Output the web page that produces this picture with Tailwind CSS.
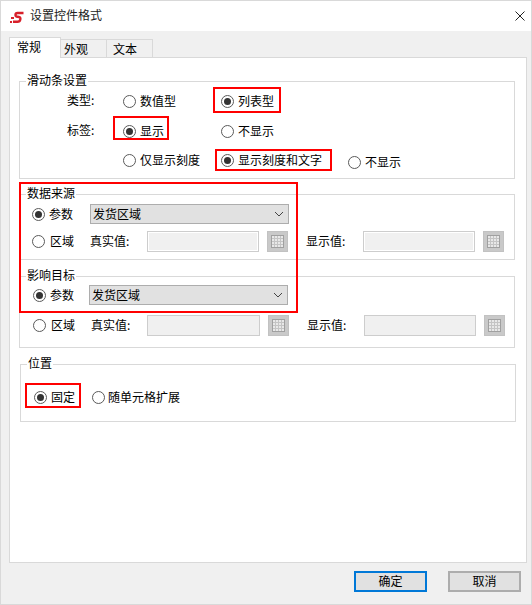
<!DOCTYPE html>
<html lang="zh-CN">
<head>
<meta charset="utf-8">
<title>设置控件格式</title>
<script src="https://cdn.jsdelivr.net/npm/@tailwindcss/browser@4"></script>
</head>
<body>
<div class="relative flex h-[605px] w-[532px] flex-col overflow-hidden border border-[#d9d9d9] bg-[#f0f0f0] font-['Noto_Sans_CJK_SC','Liberation_Sans',sans-serif] text-[12px] leading-[16px] text-black">

  <!-- title bar -->
  <div class="flex h-[30px] shrink-0 items-center bg-white">
    <svg class="ml-[9px] mt-[2px]" width="15" height="13" viewBox="0 0 15 13" fill="none"><path d="M13.5 2H7.5Q5.5 2 5.5 4Q5.5 5.6 7.5 5.8L9 6Q10.8 6.3 10.3 8.5Q9.8 10.8 7.5 10.8H3" stroke="#d8202a" stroke-width="2.4"/><rect x="1" y="6" width="3" height="2" fill="#d8202a"/><rect x="0" y="10" width="2" height="2" fill="#d8202a"/></svg>
    <span class="mb-[2px] ml-[5px] text-[#222]">设置控件格式</span>
    <svg class="ml-auto mr-[6px]" width="10" height="10" viewBox="0 0 10 10" fill="none"><path d="M0.5 0.5L9.5 9.5M9.5 0.5L0.5 9.5" stroke="#222" stroke-width="1"/></svg>
  </div>

  <!-- tabs -->
  <div class="mt-[6px] flex h-[20px] shrink-0 items-end pl-[8px]">
    <div class="relative z-10 -mb-px h-[21px] w-[52px] border border-b-0 border-[#d9d9d9] bg-white pl-[7px] pt-[1px]">常规</div>
    <div class="h-[18px] w-[46px] border border-l-0 border-b-0 border-[#d9d9d9] pl-[3px] pt-[1px]">外观</div>
    <div class="h-[18px] w-[46px] border border-l-0 border-b-0 border-[#d9d9d9] pl-[6px] pt-[1px]">文本</div>
  </div>

  <!-- panel -->
  <div class="ml-[8px] h-[506px] w-[518px] shrink-0 border border-[#d9d9d9] bg-white">

    <!-- 滑动条设置 -->
    <div class="ml-[9px] mt-[23px] h-[98px] w-[496px] border border-[#d9d9d9]">
      <div class="-mt-[10px] ml-[6px] w-fit bg-white px-[1px]">滑动条设置</div>
      <div class="mt-[3px] flex h-[20px] items-center pl-[47px]">
        <span class="mb-[2px] w-[56px]">类型:</span>
        <label class="flex w-[98px] items-center gap-[4px]"><span class="h-[13px] w-[13px] rounded-full border border-[#5a5a5a] bg-white"></span><span>数值型</span></label>
        <label class="flex items-center gap-[4px]"><span class="flex h-[13px] w-[13px] items-center justify-center rounded-full border border-[#5a5a5a] bg-white"><span class="h-[7px] w-[7px] rounded-full bg-[#333]"></span></span><span>列表型</span></label>
      </div>
      <div class="mt-[10px] flex h-[20px] items-center pl-[47px]">
        <span class="mb-[2px] w-[56px]">标签:</span>
        <label class="flex w-[98px] items-center gap-[4px]"><span class="flex h-[13px] w-[13px] items-center justify-center rounded-full border border-[#5a5a5a] bg-white"><span class="h-[7px] w-[7px] rounded-full bg-[#333]"></span></span><span>显示</span></label>
        <label class="flex items-center gap-[4px]"><span class="h-[13px] w-[13px] rounded-full border border-[#5a5a5a] bg-white"></span><span>不显示</span></label>
      </div>
      <div class="mt-[9px] flex h-[20px] items-center pl-[103px]">
        <label class="flex w-[98px] items-center gap-[4px]"><span class="h-[13px] w-[13px] rounded-full border border-[#5a5a5a] bg-white"></span><span>仅显示刻度</span></label>
        <label class="flex w-[127px] items-center gap-[4px]"><span class="flex h-[13px] w-[13px] items-center justify-center rounded-full border border-[#5a5a5a] bg-white"><span class="h-[7px] w-[7px] rounded-full bg-[#333]"></span></span><span>显示刻度和文字</span></label>
        <label class="mt-[4px] flex items-center gap-[4px]"><span class="h-[13px] w-[13px] rounded-full border border-[#5a5a5a] bg-white"></span><span>不显示</span></label>
      </div>
    </div>

    <!-- 数据来源 -->
    <div class="ml-[9px] mt-[15px] h-[66px] w-[496px] border border-[#d9d9d9]">
      <div class="-mt-[10px] ml-[6px] w-fit bg-white px-[1px]">数据来源</div>
      <div class="mt-[3px] flex h-[20px] items-center pl-[12px]">
        <label class="flex w-[58px] items-center gap-[4px]"><span class="flex h-[13px] w-[13px] items-center justify-center rounded-full border border-[#5a5a5a] bg-white"><span class="h-[7px] w-[7px] rounded-full bg-[#333]"></span></span><span>参数</span></label>
        <div class="flex h-[20px] w-[199px] items-center justify-between border border-[#adadad] bg-[#e1e1e1] pl-[2px] pr-[4px]"><span>发货区域</span><svg width="10" height="6" viewBox="0 0 10 6" fill="none"><path d="M1 1L5 5L9 1" stroke="#444" stroke-width="1"/></svg></div>
      </div>
      <div class="mt-[7px] flex h-[21px] items-center pl-[12px]">
        <label class="flex w-[58px] items-center gap-[5px]"><span class="h-[13px] w-[13px] rounded-full border border-[#5a5a5a] bg-white"></span><span class="mb-[2px]">区域</span></label>
        <span class="mb-[2px] w-[57px]">真实值:</span>
        <div class="h-[21px] w-[112px] border border-[#cdcdcd] bg-[#f0f0f0] shadow-[inset_0_0_0_1px_white]"></div>
        <div class="ml-[8px] flex h-[21px] w-[21px] items-center justify-center border border-[#c2c2c2] bg-[#c9c9c9]"><svg width="13" height="13" viewBox="0 0 13 13"><rect x="0.5" y="0.5" width="12" height="12" fill="#e8e8e8" stroke="#a0a0a0"/><path d="M3.5 1V12M6.5 1V12M9.5 1V12M1 3.5H12M1 6.5H12M1 9.5H12" stroke="#c4c4c4"/></svg></div>
        <span class="mb-[2px] ml-[18px] w-[57px]">显示值:</span>
        <div class="h-[21px] w-[112px] border border-[#cdcdcd] bg-[#f0f0f0] shadow-[inset_0_0_0_1px_white]"></div>
        <div class="ml-[8px] flex h-[21px] w-[21px] items-center justify-center border border-[#c2c2c2] bg-[#c9c9c9]"><svg width="13" height="13" viewBox="0 0 13 13"><rect x="0.5" y="0.5" width="12" height="12" fill="#e8e8e8" stroke="#a0a0a0"/><path d="M3.5 1V12M6.5 1V12M9.5 1V12M1 3.5H12M1 6.5H12M1 9.5H12" stroke="#c4c4c4"/></svg></div>
      </div>
    </div>

    <!-- 影响目标 -->
    <div class="ml-[9px] mt-[16px] h-[72px] w-[496px] border border-[#d9d9d9]">
      <div class="-mt-[10px] ml-[6px] w-fit bg-white px-[1px]">影响目标</div>
      <div class="mt-[2px] flex h-[20px] items-center pl-[13px]">
        <label class="flex w-[56px] items-center gap-[4px]"><span class="flex h-[13px] w-[13px] items-center justify-center rounded-full border border-[#5a5a5a] bg-white"><span class="h-[7px] w-[7px] rounded-full bg-[#333]"></span></span><span>参数</span></label>
        <div class="flex h-[20px] w-[199px] items-center justify-between border border-[#adadad] bg-[#e1e1e1] pl-[2px] pr-[4px]"><span>发货区域</span><svg width="10" height="6" viewBox="0 0 10 6" fill="none"><path d="M1 1L5 5L9 1" stroke="#444" stroke-width="1"/></svg></div>
      </div>
      <div class="mt-[10px] flex h-[21px] items-center pl-[13px]">
        <label class="flex w-[58px] items-center gap-[5px]"><span class="h-[13px] w-[13px] rounded-full border border-[#5a5a5a] bg-white"></span><span class="mb-[2px]">区域</span></label>
        <span class="mb-[2px] w-[56px]">真实值:</span>
        <div class="h-[21px] w-[113px] border border-[#cdcdcd] bg-[#f0f0f0]"></div>
        <div class="ml-[8px] flex h-[21px] w-[21px] items-center justify-center border border-[#c2c2c2] bg-[#c9c9c9]"><svg width="13" height="13" viewBox="0 0 13 13"><rect x="0.5" y="0.5" width="12" height="12" fill="#e8e8e8" stroke="#a0a0a0"/><path d="M3.5 1V12M6.5 1V12M9.5 1V12M1 3.5H12M1 6.5H12M1 9.5H12" stroke="#c4c4c4"/></svg></div>
        <span class="mb-[2px] ml-[18px] w-[57px]">显示值:</span>
        <div class="h-[21px] w-[112px] border border-[#cdcdcd] bg-[#f0f0f0]"></div>
        <div class="ml-[8px] flex h-[21px] w-[21px] items-center justify-center border border-[#c2c2c2] bg-[#c9c9c9]"><svg width="13" height="13" viewBox="0 0 13 13"><rect x="0.5" y="0.5" width="12" height="12" fill="#e8e8e8" stroke="#a0a0a0"/><path d="M3.5 1V12M6.5 1V12M9.5 1V12M1 3.5H12M1 6.5H12M1 9.5H12" stroke="#c4c4c4"/></svg></div>
      </div>
    </div>

    <!-- 位置 -->
    <div class="ml-[10px] mt-[16px] h-[58px] w-[496px] border border-[#d9d9d9]">
      <div class="-mt-[10px] ml-[6px] w-fit bg-white px-[1px]">位置</div>
      <div class="mt-[16px] flex h-[20px] items-center pl-[13px]">
        <label class="flex w-[58px] items-center gap-[4px]"><span class="flex h-[13px] w-[13px] items-center justify-center rounded-full border border-[#5a5a5a] bg-white"><span class="h-[7px] w-[7px] rounded-full bg-[#333]"></span></span><span>固定</span></label>
        <label class="flex items-center gap-[3px]"><span class="h-[13px] w-[13px] rounded-full border border-[#5a5a5a] bg-white"></span><span>随单元格扩展</span></label>
      </div>
    </div>
  </div>

  <!-- footer -->
  <div class="mt-[8px] flex justify-end gap-[21px] pr-[10px]">
    <button class="h-[21px] w-[73px] border-2 border-[#0078d7] bg-[#e1e1e1] pb-[2px] text-[12px] leading-[16px]">确定</button>
    <button class="h-[21px] w-[73px] border-2 border-[#adadad] bg-[#e1e1e1] pb-[2px] text-[12px] leading-[16px]">取消</button>
  </div>

  <!-- red annotation boxes -->
  <div class="absolute left-[212px] top-[86px] h-[26px] w-[68px] border-2 border-[#ff0000]"></div>
  <div class="absolute left-[112px] top-[115px] h-[24px] w-[56px] border-2 border-[#ff0000]"></div>
  <div class="absolute left-[214px] top-[148px] h-[22px] w-[117px] border-2 border-[#ff0000]"></div>
  <div class="absolute left-[18px] top-[181px] h-[131px] w-[279px] border-2 border-[#ff0000]"></div>
  <div class="absolute left-[24px] top-[382px] h-[25px] w-[56px] border-2 border-[#ff0000]"></div>
</div>
</body>
</html>
